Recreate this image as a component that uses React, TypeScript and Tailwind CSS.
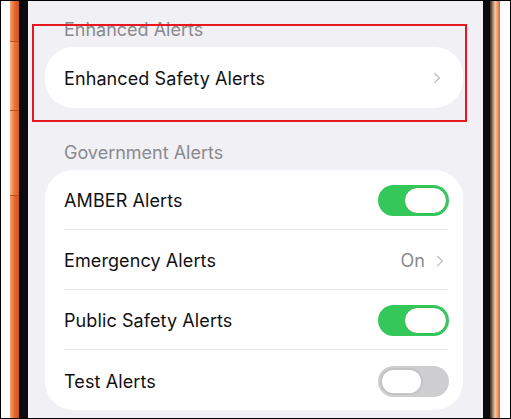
import { ChevronRight } from "lucide-react";

const font = { fontFamily: "Inter, 'Noto Sans', sans-serif" };

function Toggle({ on }: { on: boolean }) {
  return (
    <div
      className={`w-[71px] h-[31px] rounded-full p-[2px] flex ${
        on ? "bg-[#34c759] justify-end" : "bg-[#cfcfd1] justify-start"
      }`}
    >
      <div
        className={`w-[43px] h-[27px] rounded-full bg-white ${
          on ? "border border-[#2fb84f]" : "border-2 border-[#c4c4c6]"
        }`}
      />
    </div>
  );
}

function Row({ label, last, right }: { label: string; last?: boolean; right: React.ReactNode }) {
  return (
    <div className="h-[60px] flex flex-col">
      <div className="flex-1 flex items-center pl-[19px] pr-[14px] pt-[2px]">
        <span className="text-[18px] text-[#111113] tracking-[0.1px]">{label}</span>
        <div className="ml-auto flex items-center">{right}</div>
      </div>
      {!last && <div className="h-px bg-[#e6e6ea] ml-[19px] mr-[16px]" />}
    </div>
  );
}

export default function App() {
  return (
    <div className="w-[511px] h-[419px] overflow-hidden border border-black bg-white flex" style={font}>
      {/* left frame */}
      <div className="w-[9px] bg-white" />
      <div className="w-[9px] flex flex-col bg-[#e86f2a]">
        <div className="h-[40px] bg-gradient-to-r from-[#f3a070] via-[#e8692a] to-[#c9521c]" />
        <div className="h-[70px] bg-gradient-to-r from-[#f7b58a] via-[#ec7436] to-[#d85c20] border-y border-[#b8501c]" />
        <div className="h-[85px] bg-gradient-to-r from-[#f7b58a] via-[#ec7436] to-[#d85c20] border-b border-[#b8501c]" />
        <div className="flex-1 bg-gradient-to-r from-[#f3a070] via-[#e8692a] to-[#c9521c]" />
      </div>
      <div className="w-[9px] bg-[#0b0b0d]" />

      {/* screen */}
      <div className="relative w-[455px] h-full bg-[#f0f0f5] flex flex-col pl-[17px] pr-[20px] pt-[18px]">
        <div className="h-[22px] pl-[19px] text-[18px] leading-[22px] text-[#8a8a8f]">Enhanced Alerts</div>
        <div className="mt-[6px] h-[61px] rounded-[28px] bg-white flex items-center pl-[19px] pr-[17px] pt-[1px]">
          <span className="text-[18px] text-[#111113] tracking-[0.1px]">Enhanced Safety Alerts</span>
          <ChevronRight className="ml-auto w-[18px] h-[18px] text-[#c4c4c8]" strokeWidth={2} />
        </div>

        <div className="mt-[34px] h-[22px] pl-[19px] text-[18px] leading-[22px] text-[#8a8a8f]">Government Alerts</div>
        <div className="mt-[6px] rounded-[28px] bg-white flex flex-col">
          <Row label="AMBER Alerts" right={<Toggle on />} />
          <Row
            label="Emergency Alerts"
            right={
              <>
                <span className="text-[18px] text-[#8a8a8f] mr-[6px]">On</span>
                <ChevronRight className="w-[18px] h-[18px] text-[#c4c4c8]" strokeWidth={2} />
              </>
            }
          />
          <Row label="Public Safety Alerts" right={<Toggle on />} />
          <Row label="Test Alerts" last right={<Toggle on={false} />} />
        </div>

        {/* blurred top bar */}
        <div className="absolute left-0 right-0 top-0 h-[21px] bg-gradient-to-b from-[#f0f0f5] via-[#f0f0f5] to-[#f0f0f5]/60" />

        {/* annotation */}
        <div className="absolute left-[4px] top-[23px] w-[435px] h-[98px] border-2 border-[#e8161e]" />
      </div>

      {/* right frame */}
      <div className="w-[7px] bg-[#0b0b0d]" />
      <div className="w-[10px] bg-gradient-to-r from-[#3a2a20] via-[#f6c9a8] to-[#e0621f]" />
      <div className="flex-1 bg-white" />
    </div>
  );
}
